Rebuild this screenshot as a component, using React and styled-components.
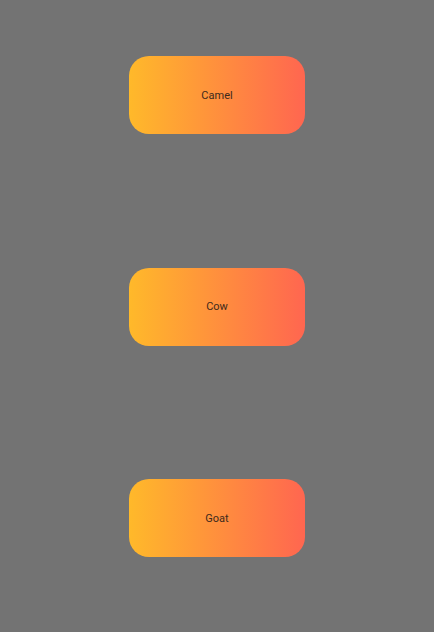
import React from 'react';
import styled, { createGlobalStyle } from 'styled-components';

const animals = ['Camel', 'Cow', 'Goat'];

export default function App() {
  return (
    <>
      <GlobalStyle />
      <Page>
        {animals.map((name) => (
          <Card key={name}>{name}</Card>
        ))}
      </Page>
    </>
  );
}

const GlobalStyle = createGlobalStyle`
  html, body {
    margin: 0;
    background: #737373;
  }
  body {
    font-family: Roboto, "Liberation Sans", sans-serif;
  }
`;

const Page = styled.div`
  display: flex;
  flex-direction: column;
  align-items: center;
  gap: 133.5px;
  padding-top: 56px;
  min-height: 632px;
  box-sizing: border-box;
`;

const Card = styled.div`
  width: 176px;
  height: 78px;
  border-radius: 20px;
  background: linear-gradient(to right, #ffb92a, #ff6650);
  display: flex;
  align-items: center;
  justify-content: center;
  font-size: 11px;
  color: #3d2a1c;
`;
